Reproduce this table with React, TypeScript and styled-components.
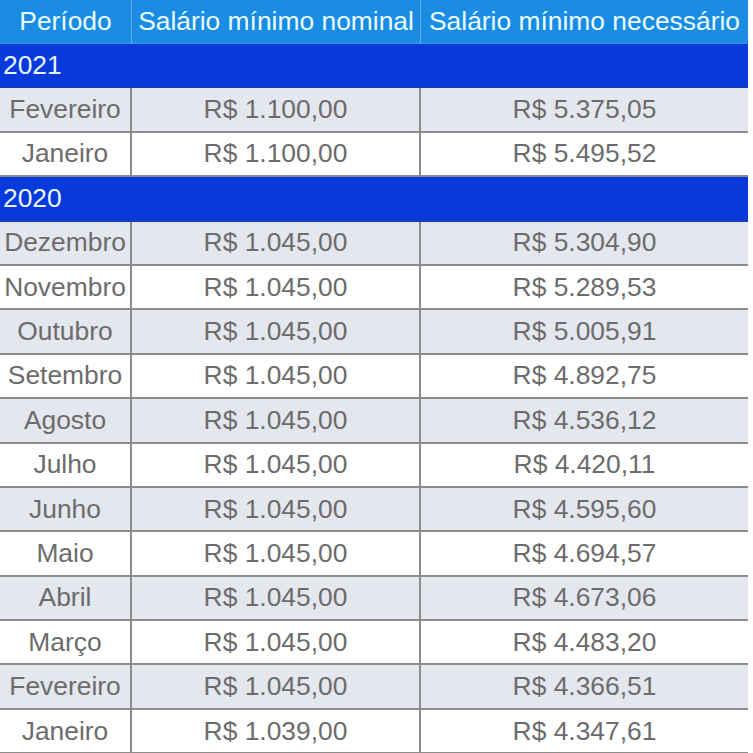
import React from "react";
import styled, { createGlobalStyle } from "styled-components";

const GlobalStyle = createGlobalStyle`
  html, body {
    margin: 0;
    padding: 0;
    background: #ffffff;
  }
  body {
    font-family: "Liberation Sans", Arial, sans-serif;
  }
`;

const Table = styled.div`
  width: 748px;
  display: grid;
  grid-template-columns: 132px 289px 327px;
  font-size: 26.4px;
  overflow: hidden;
  height: 753px;
`;

const HeadCell = styled.div<{ $last?: boolean }>`
  height: 43px;
  background: #1a8de2;
  color: #e9fbff;
  display: flex;
  align-items: center;
  justify-content: center;
  white-space: nowrap;
  border-right: ${(p) => (p.$last ? "none" : "1px solid #63b0ee")};
  border-bottom: 1px solid #3f8fd8;
`;

const YearRow = styled.div`
  grid-column: 1 / -1;
  height: 43.4px;
  background: #0839da;
  color: #e6f4ff;
  display: flex;
  align-items: center;
  padding-left: 3px;
  border-bottom: 1px solid #1f3fa8;
`;

const Cell = styled.div<{ $shade: boolean; $last?: boolean }>`
  height: 42.4px;
  background: ${(p) => (p.$shade ? "#e4e7ee" : "#ffffff")};
  color: #6c6c6c;
  display: flex;
  align-items: center;
  justify-content: center;
  white-space: nowrap;
  border-bottom: 2px solid #8c8c8c;
  border-right: ${(p) => (p.$last ? "none" : "2px solid #8c8c8c")};
`;

type Row = [string, string, string];

const groups: { year: string; rows: Row[] }[] = [
  {
    year: "2021",
    rows: [
      ["Fevereiro", "R$ 1.100,00", "R$ 5.375,05"],
      ["Janeiro", "R$ 1.100,00", "R$ 5.495,52"],
    ],
  },
  {
    year: "2020",
    rows: [
      ["Dezembro", "R$ 1.045,00", "R$ 5.304,90"],
      ["Novembro", "R$ 1.045,00", "R$ 5.289,53"],
      ["Outubro", "R$ 1.045,00", "R$ 5.005,91"],
      ["Setembro", "R$ 1.045,00", "R$ 4.892,75"],
      ["Agosto", "R$ 1.045,00", "R$ 4.536,12"],
      ["Julho", "R$ 1.045,00", "R$ 4.420,11"],
      ["Junho", "R$ 1.045,00", "R$ 4.595,60"],
      ["Maio", "R$ 1.045,00", "R$ 4.694,57"],
      ["Abril", "R$ 1.045,00", "R$ 4.673,06"],
      ["Março", "R$ 1.045,00", "R$ 4.483,20"],
      ["Fevereiro", "R$ 1.045,00", "R$ 4.366,51"],
      ["Janeiro", "R$ 1.039,00", "R$ 4.347,61"],
    ],
  },
];

const App = () => {
  return (
    <>
      <GlobalStyle />
      <Table>
        <HeadCell>Período</HeadCell>
        <HeadCell>Salário mínimo nominal</HeadCell>
        <HeadCell $last>Salário mínimo necessário</HeadCell>
        {groups.map((g) => (
          <React.Fragment key={g.year}>
            <YearRow>{g.year}</YearRow>
            {g.rows.map((r, i) => (
              <React.Fragment key={r[0]}>
                <Cell $shade={i % 2 === 0}>{r[0]}</Cell>
                <Cell $shade={i % 2 === 0}>{r[1]}</Cell>
                <Cell $shade={i % 2 === 0} $last>
                  {r[2]}
                </Cell>
              </React.Fragment>
            ))}
          </React.Fragment>
        ))}
      </Table>
    </>
  );
};

export default App;
